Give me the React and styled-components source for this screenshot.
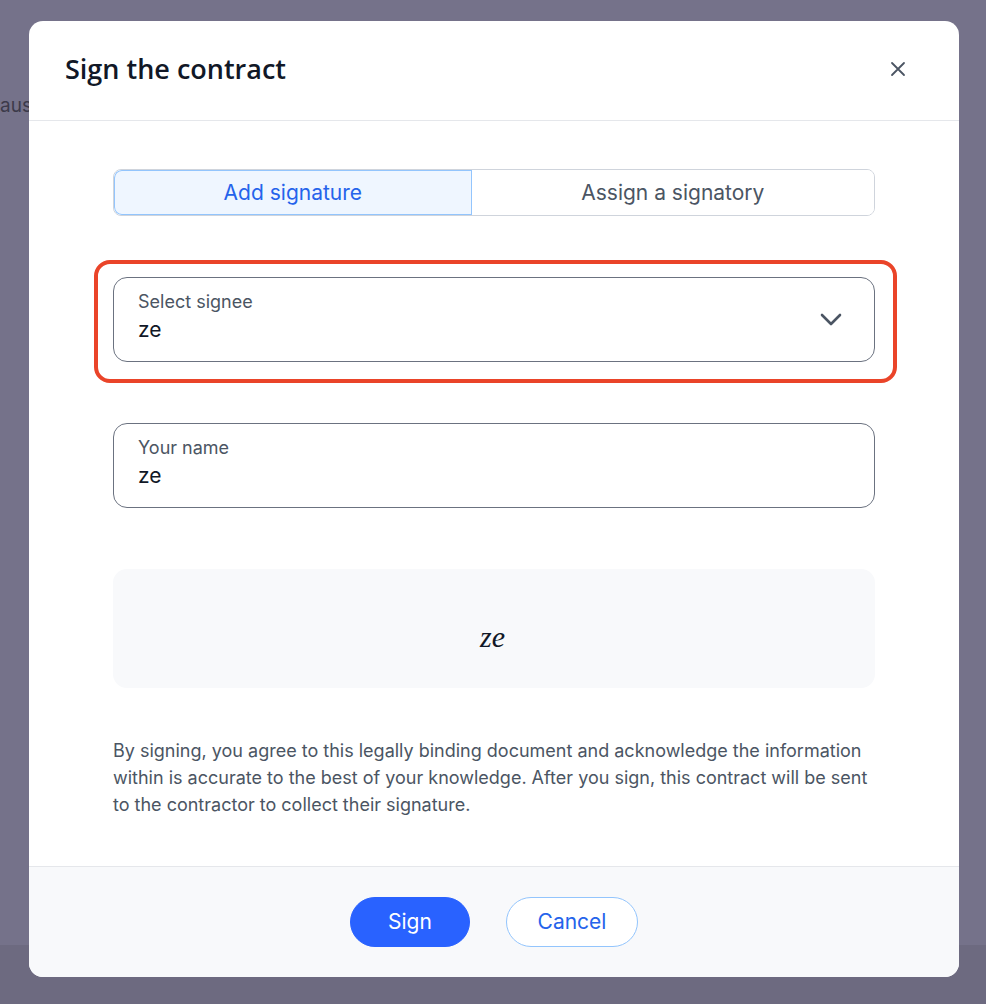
import styled, { createGlobalStyle } from 'styled-components';

const GlobalStyle = createGlobalStyle`
  html, body {
    margin: 0;
    padding: 0;
    background: #75728a;
    font-family: Inter, "Noto Sans", sans-serif;
  }
`

const Page = styled.div`
  position: relative;
  width: 986px;
  height: 1004px;
  overflow: hidden;
  background: linear-gradient(to bottom, #75728a 0, #75728a 945px, #6d6a80 945px);
`

const BehindText = styled.div`
  position: absolute;
  left: 0;
  top: 94px;
  font-size: 19px;
  color: #3c3a4a;
`

const Modal = styled.div`
  position: absolute;
  left: 29px;
  top: 21px;
  width: 930px;
  height: 956px;
  background: #ffffff;
  border-radius: 14px;
  overflow: hidden;
  display: flex;
  flex-direction: column;
`

const Header = styled.div`
  height: 100px;
  display: flex;
  align-items: center;
  justify-content: space-between;
  padding: 0 53px 4px 36px;
  box-sizing: border-box;
  border-bottom: 1px solid #e5e7eb;
  flex-shrink: 0;
`

const Title = styled.h2`
  margin: 0;
  font-family: "Open Sans", Inter, sans-serif;
  font-size: 27px;
  font-weight: 600;
  color: #111827;
`

const CloseButton = styled.button`
  border: none;
  background: none;
  padding: 0;
  display: flex;
  color: #4b5563;
  cursor: pointer;
`

const Body = styled.div`
  flex: 1;
  padding: 48px 84px 0;
  display: flex;
  flex-direction: column;
`

const Tabs = styled.div`
  display: flex;
  height: 47px;
  border: 1px solid #cfd4dc;
  border-radius: 8px;
  overflow: hidden;
  box-sizing: border-box;
`

const Tab = styled.button`
  flex: 1 1 auto;
  padding: 0 20px;
  border: none;
  font-family: Inter, sans-serif;
  font-size: 21px;
  background: ${p => (p.$active ? '#eff6ff' : '#ffffff')};
  color: ${p => (p.$active ? '#2563eb' : '#4b5563')};
  box-shadow: ${p => (p.$active ? 'inset 0 0 0 1px #93c5fd' : 'none')};
  border-radius: ${p => (p.$active ? '8px 0 0 8px' : '0')};
  cursor: pointer;
`

const HighlightWrap = styled.div`
  position: relative;
  margin-top: 61px;
`

const Highlight = styled.div`
  position: absolute;
  left: -19px;
  right: -22px;
  top: -17px;
  bottom: -21px;
  border: 4px solid #ea4429;
  border-radius: 16px;
  pointer-events: none;
`

const Field = styled.div`
  height: 85px;
  box-sizing: border-box;
  border: 1px solid #6b7280;
  border-radius: 14px;
  padding: 13px 24px 0;
  display: flex;
  align-items: center;
  justify-content: space-between;
  margin-top: ${p => p.$top || 0}px;
`

const FieldText = styled.div`
  display: flex;
  flex-direction: column;
  align-self: flex-start;
`

const Label = styled.span`
  font-size: 18px;
  color: #4b5563;
  line-height: 22px;
`

const Value = styled.span`
  font-size: 21px;
  color: #111827;
  line-height: 34px;
`

const Chevron = styled.svg`
  margin-right: 8px;
  margin-top: -14px;
`

const SignaturePad = styled.div`
  margin-top: 61px;
  height: 119px;
  background: #f8f9fb;
  border-radius: 14px;
  display: flex;
  align-items: center;
  justify-content: center;
`

const SignatureText = styled.span`
  font-family: "Liberation Serif", "DejaVu Serif", serif;
  font-style: italic;
  font-size: 30px;
  color: #111827;
  margin-left: -3px;
  margin-top: 16px;
`

const Notice = styled.p`
  margin: 49px 0 0;
  font-size: 18px;
  line-height: 27px;
  color: #4b5563;
`

const Footer = styled.div`
  height: 111px;
  flex-shrink: 0;
  box-sizing: border-box;
  border-top: 1px solid #e5e7eb;
  background: #f8f9fb;
  display: flex;
  justify-content: center;
  align-items: center;
  gap: 36px;
  padding-bottom: 1px;
`

const Button = styled.button`
  height: 50px;
  width: ${p => p.$width}px;
  border-radius: 25px;
  font-family: Inter, sans-serif;
  font-size: 21px;
  cursor: pointer;
  border: 1px solid ${p => (p.$primary ? '#2962ff' : '#93c5fd')};
  background: ${p => (p.$primary ? '#2962ff' : '#ffffff')};
  color: ${p => (p.$primary ? '#ffffff' : '#2563eb')};
`

const App = () => {
  return (
    <Page>
      <GlobalStyle />
      <BehindText>aus</BehindText>
      <Modal>
        <Header>
          <Title>Sign the contract</Title>
          <CloseButton aria-label="Close">
            <svg width="16" height="16" viewBox="0 0 16 16" fill="none" stroke="currentColor" strokeWidth="1.8" strokeLinecap="round">
              <path d="M2 2L14 14M14 2L2 14" />
            </svg>
          </CloseButton>
        </Header>
        <Body>
          <Tabs>
            <Tab $active>Add signature</Tab>
            <Tab>Assign a signatory</Tab>
          </Tabs>
          <HighlightWrap>
            <Field>
              <FieldText>
                <Label>Select signee</Label>
                <Value>ze</Value>
              </FieldText>
              <Chevron width="22" height="13" viewBox="0 0 22 13" fill="none" stroke="#4b5563" strokeWidth="2.6" strokeLinecap="round" strokeLinejoin="round">
                <path d="M2 2L11 11L20 2" />
              </Chevron>
            </Field>
            <Highlight />
          </HighlightWrap>
          <Field $top={61}>
            <FieldText>
              <Label>Your name</Label>
              <Value>ze</Value>
            </FieldText>
          </Field>
          <SignaturePad>
            <SignatureText>ze</SignatureText>
          </SignaturePad>
          <Notice>
            By signing, you agree to this legally binding document and acknowledge the information
            within is accurate to the best of your knowledge. After you sign, this contract will be sent
            to the contractor to collect their signature.
          </Notice>
        </Body>
        <Footer>
          <Button $primary $width={120}>Sign</Button>
          <Button $width={132}>Cancel</Button>
        </Footer>
      </Modal>
    </Page>
  );
};

export default App;
